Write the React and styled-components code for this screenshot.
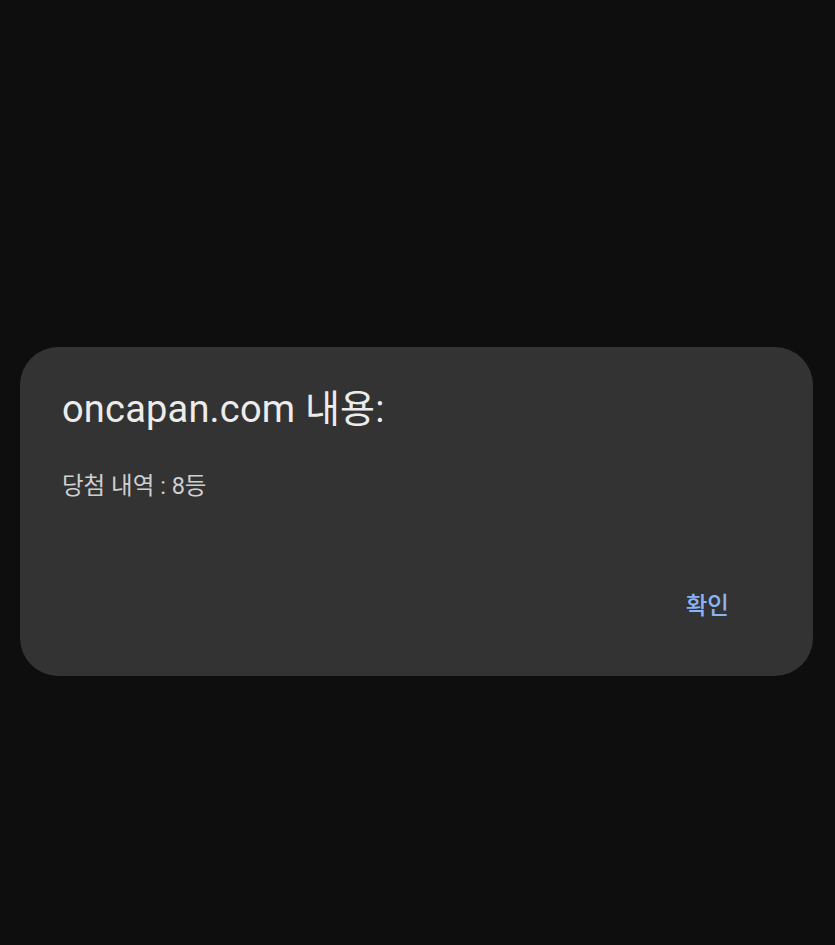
import styled, { createGlobalStyle } from 'styled-components';

const GlobalStyle = createGlobalStyle`
  html, body {
    margin: 0;
    padding: 0;
    background: #0e0e0e;
  }
  #root {
    min-height: 945px;
  }
`;

const App = () => {
  return (
    <>
      <GlobalStyle />
      <Screen>
        <Dialog>
          <Title>oncapan.com 내용:</Title>
          <Message>당첨 내역 : 8등</Message>
          <Actions>
            <Button>확인</Button>
          </Actions>
        </Dialog>
      </Screen>
    </>
  );
};

export default App;

const Screen = styled.div`
  height: 945px;
  display: flex;
  align-items: flex-start;
  padding: 347px 22px 0 20px;
  box-sizing: border-box;
  font-family: Roboto, 'Noto Sans CJK KR', sans-serif;
`;

const Dialog = styled.div`
  flex: 1;
  height: 329px;
  box-sizing: border-box;
  background: #333333;
  border-radius: 38px;
  padding: 37px 42px 0 42px;
  display: flex;
  flex-direction: column;
`;

const Title = styled.h2`
  margin: 0;
  font-size: 38px;
  font-weight: 400;
  letter-spacing: 0.2px;
  color: #ececec;
  line-height: 50px;
`;

const Message = styled.p`
  margin: 35px 0 0;
  font-size: 23.5px;
  color: #cfcfcf;
  line-height: 34px;
`;

const Actions = styled.div`
  display: flex;
  justify-content: flex-end;
  margin-top: 86px;
  padding-right: 42px;
`;

const Button = styled.button`
  background: none;
  border: none;
  padding: 0;
  font-family: inherit;
  font-size: 23.5px;
  font-weight: 500;
  color: #8ab4f8;
  line-height: 34px;
  cursor: pointer;
`;
